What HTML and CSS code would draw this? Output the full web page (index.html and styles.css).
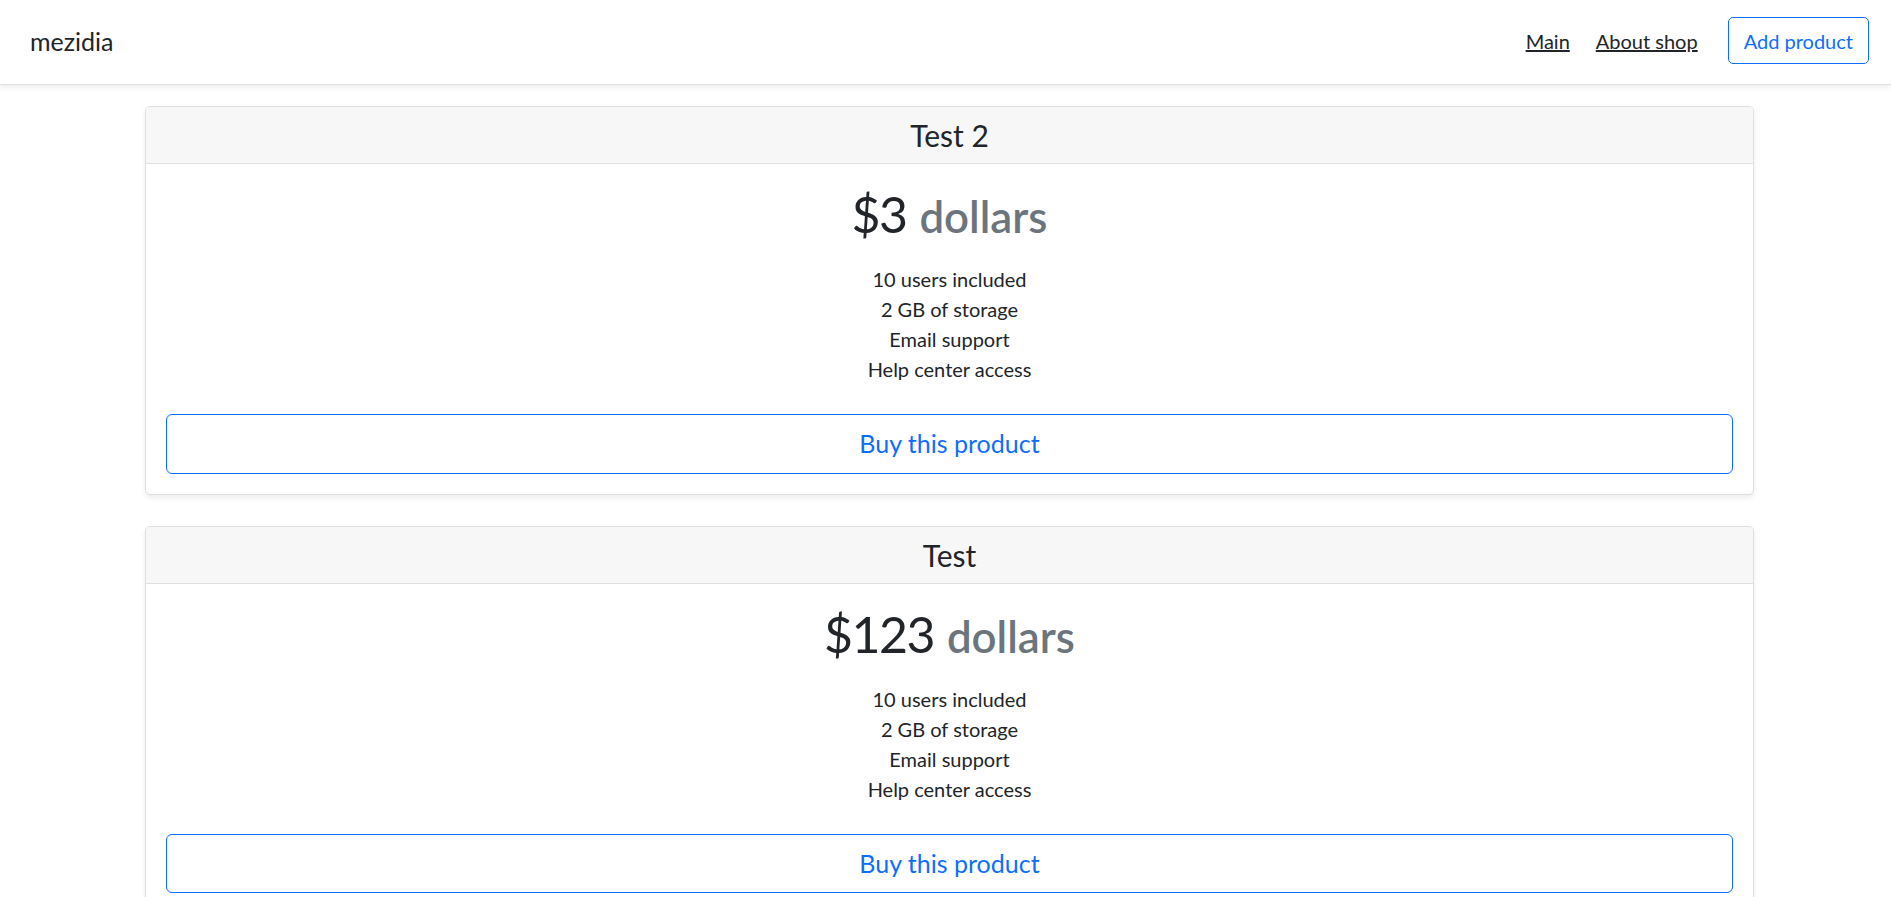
FILE: index.html
```html
<!DOCTYPE html>
<html lang="en">
<head>
<meta charset="utf-8">
<title>mezidia</title>
<link rel="stylesheet" href="styles.css">
</head>
<body>
<header class="topbar">
  <div class="brand">mezidia</div>
  <nav class="nav">
    <a class="nav-link" href="#">Main</a>
    <a class="nav-link" href="#">About shop</a>
  </nav>
  <a class="btn-add" href="#">Add product</a>
</header>
<main class="main">
  <div class="card">
    <div class="card-header"><h4 class="card-name">Test 2</h4></div>
    <div class="card-body">
      <h1 class="price"><span class="amount">$3</span> <small class="unit">dollars</small></h1>
      <ul class="features">
        <li>10 users included</li>
        <li>2 GB of storage</li>
        <li>Email support</li>
        <li>Help center access</li>
      </ul>
      <button class="btn-buy" type="button">Buy this product</button>
    </div>
  </div>
  <div class="card">
    <div class="card-header"><h4 class="card-name">Test</h4></div>
    <div class="card-body">
      <h1 class="price"><span class="amount">$123</span> <small class="unit">dollars</small></h1>
      <ul class="features">
        <li>10 users included</li>
        <li>2 GB of storage</li>
        <li>Email support</li>
        <li>Help center access</li>
      </ul>
      <button class="btn-buy" type="button">Buy this product</button>
    </div>
  </div>
</main>
</body>
</html>
```

FILE: styles.css
```css
* { box-sizing: border-box; }
html, body {
  margin: 0;
  padding: 0;
  background: #fff;
}
body {
  font-family: Lato, "Open Sans", sans-serif;
  font-size: 20px;
  line-height: 30px;
  color: #212529;
}
.topbar {
  display: flex;
  align-items: center;
  padding: 17px 22px 20px 30px;
  background: #fff;
  border-bottom: 1px solid #dfdfdf;
  box-shadow: 0 2.5px 5px rgba(0, 0, 0, 0.075);
  position: relative;
  z-index: 1;
}
.brand {
  font-size: 25px;
  line-height: 30px;
  margin-right: auto;
  color: #212529;
}
.nav {
  margin-right: 20px;
  display: flex;
  gap: 6px;
}
.nav-link {
  padding: 0 10px;
  color: #212529;
  text-decoration: underline;
}
.btn-add {
  display: inline-block;
  padding: 7.5px 15px;
  border: 1px solid #0d6efd;
  border-radius: 5px;
  color: #0d6efd;
  text-decoration: none;
  line-height: 30px;
  font-size: 20px;
}
.main {
  padding: 21px 137px 0 145px;
}
.card {
  border: 1px solid #dfdfdf;
  border-radius: 5px;
  box-shadow: 0 2.5px 5px rgba(0, 0, 0, 0.075);
  margin-bottom: 31px;
  background: #fff;
  overflow: hidden;
}
.card-header {
  background: #f7f7f7;
  border-bottom: 1px solid #dfdfdf;
  padding: 10px 20px;
  text-align: center;
}
.card-name {
  margin: 0;
  font-size: 30px;
  line-height: 36px;
  font-weight: 400;
}
.card-body {
  padding: 20px;
  text-align: center;
}
.price {
  margin: 0 0 10px;
  font-size: 50px;
  line-height: 60px;
  font-weight: 400;
  color: #212529;
}
.amount {
  letter-spacing: -1.5px;
}
.unit {
  font-size: 0.875em;
  color: #6c757d;
  font-weight: 600;
}
.features {
  list-style: none;
  padding: 0;
  margin: 18px 0 30px;
}
.btn-buy {
  display: block;
  width: 100%;
  padding: 10px 20px;
  font-family: inherit;
  font-size: 25px;
  line-height: 37.5px;
  color: #0d6efd;
  background: transparent;
  border: 1px solid #0d6efd;
  border-radius: 6px;
  cursor: pointer;
}
```
